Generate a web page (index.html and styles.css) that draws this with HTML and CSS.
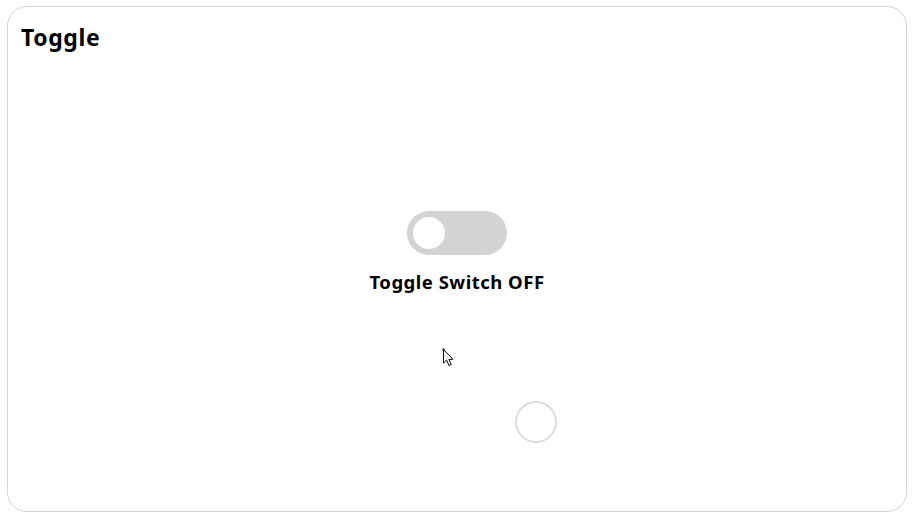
FILE: index.html
```html
<!DOCTYPE html>
<html>
<head>
<meta charset="utf-8">
<link rel="stylesheet" href="styles.css">
</head>
<body>
<div class="card">
  <h1 class="title">Toggle</h1>
  <div class="stage">
    <div class="switch"><span class="knob"></span></div>
    <div class="label">Toggle Switch OFF</div>
  </div>
  <div class="ring"></div>
  <svg class="cursor" width="14" height="20" viewBox="0 0 14 20"><circle cx="1.5" cy="1.5" r="1.6" fill="#9a9a9a"/><path d="M1.5 1.5 L1.5 15 L4.6 12.2 L7 17.6 L9.2 16.6 L6.9 11.4 L11 11.2 Z" fill="#fff" stroke="#000" stroke-width="1" stroke-linejoin="round"/></svg>
</div>
</body>
</html>
```
FILE: styles.css
```css
html, body { margin: 0; padding: 0; background: #fff; }
body { padding: 6px 12px 7px 7px; width: 918px; height: 519px; box-sizing: border-box; font-family: "Noto Sans", "Noto Sans CJK KR", sans-serif; }
.card {
  position: relative;
  box-sizing: border-box;
  width: 900px;
  height: 506px;
  border: 1px solid #d4d4d4;
  border-radius: 20px;
  padding: 0 13px;
}
.title {
  margin: 0;
  padding-top: 15px;
  font-size: 23px;
  letter-spacing: 0.6px;
  line-height: 30px;
  font-weight: 700;
  color: #000;
}
.stage {
  display: flex;
  flex-direction: column;
  align-items: center;
  padding-top: 159px;
}
.switch {
  box-sizing: border-box;
  width: 100px;
  height: 44px;
  border-radius: 22px;
  background: #d3d3d3;
  padding: 6px;
  display: flex;
  align-items: center;
}
.knob {
  width: 32px;
  height: 32px;
  border-radius: 50%;
  background: #fff;
}
.label {
  margin-top: 14px;
  font-size: 18.5px;
  letter-spacing: 0.5px;
  line-height: 26px;
  font-weight: 700;
  color: #000;
}
.ring {
  position: absolute;
  left: 507px;
  top: 394px;
  width: 38px;
  height: 38px;
  border: 2px solid #dcdcdc;
  border-radius: 50%;
}
.cursor {
  position: absolute;
  left: 434px;
  top: 341px;
}
```
